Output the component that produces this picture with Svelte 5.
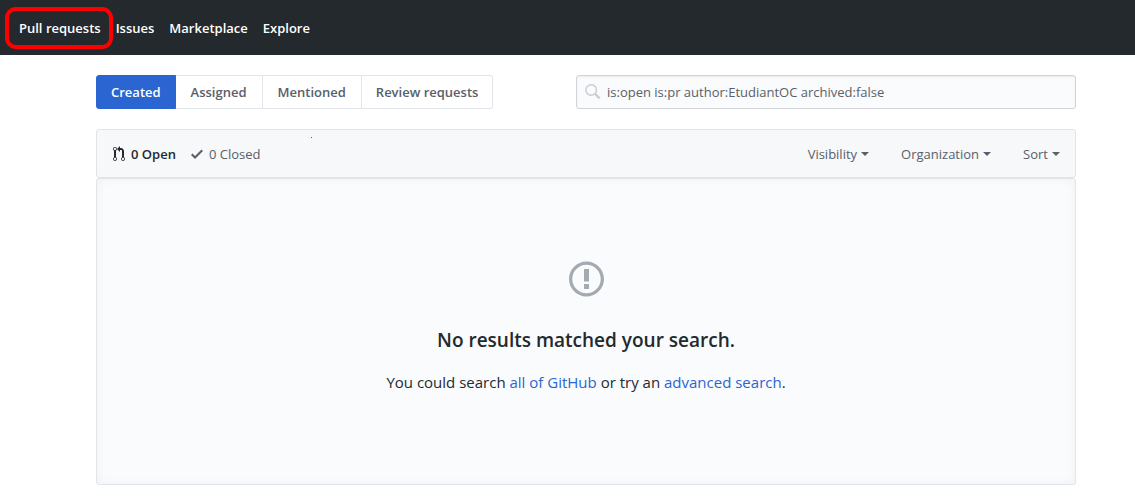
<script>
  const nav = ['Pull requests', 'Issues', 'Marketplace', 'Explore'];
  const tabs = ['Created', 'Assigned', 'Mentioned', 'Review requests'];
  const filters = ['Visibility', 'Organization', 'Sort'];
  let selected = $state('Created');
  let query = $state('is:open is:pr author:EtudiantOC archived:false');
</script>

<header>
  <nav aria-label="Global">
    {#each nav as item, i}
      <a href="#top" class:marked={i === 0}>{item}</a>
    {/each}
  </nav>
</header>

<main>
  <div class="toolbar">
    <div class="tabs">
      {#each tabs as tab}
        <button type="button" class:selected={tab === selected} onclick={() => (selected = tab)}>{tab}</button>
      {/each}
    </div>
    <form role="search" onsubmit={(e) => e.preventDefault()}>
      <svg width="16" height="16" viewBox="0 0 16 16" fill="none" stroke="#c6cbd1" aria-hidden="true">
        <circle cx="6.2" cy="6" r="5.3" stroke-width="1.4" />
        <path d="M10.2 10 14.6 14.4" stroke-width="2.2" />
      </svg>
      <input type="text" aria-label="Search all issues" spellcheck="false" bind:value={query} />
    </form>
  </div>

  <section>
    <div class="box-header">
      <a href="#open" class="state open">
        <svg width="14" height="16" viewBox="-1 0 14 16" fill="currentColor" aria-hidden="true">
          <path d="M11 11.28V5c-.03-.78-.34-1.47-.94-2.06C9.46 2.35 8.78 2.03 8 2H7V0L4 3l3 3V4h1c.27.02.48.11.69.31.21.2.3.42.31.69v6.28A1.993 1.993 0 0 0 10 15a1.993 1.993 0 0 0 1-3.72zm-1 2.92c-.66 0-1.2-.55-1.2-1.2 0-.65.55-1.2 1.2-1.2.65 0 1.2.55 1.2 1.2 0 .65-.55 1.2-1.2 1.2zM4 3c0-1.11-.89-2-2-2a1.993 1.993 0 0 0-1 3.72v6.56A1.993 1.993 0 0 0 2 15a1.993 1.993 0 0 0 1-3.72V4.72c.59-.34 1-.98 1-1.72zm-.8 10c0 .66-.55 1.2-1.2 1.2-.65 0-1.2-.55-1.2-1.2 0-.65.55-1.2 1.2-1.2.65 0 1.2.55 1.2 1.2zM2 4.2C1.34 4.2.8 3.65.8 3c0-.65.55-1.2 1.2-1.2.65 0 1.2.55 1.2 1.2 0 .65-.55 1.2-1.2 1.2z" />
        </svg>
        0 Open
      </a>
      <a href="#closed" class="state">
        <svg width="14" height="16" viewBox="-1 0 14 16" fill="currentColor" aria-hidden="true">
          <path d="M12 5l-8 8-4-4 1.5-1.5L4 10l6.5-6.5L12 5z" />
        </svg>
        0 Closed
      </a>
      <span class="dot"></span>
      <div class="filters">
        {#each filters as filter}
          <button type="button">{filter}<span class="caret"></span></button>
        {/each}
      </div>
    </div>
    <div class="blank">
      <svg width="35" height="40" viewBox="0 0 14 16" fill="#a3aab1" aria-hidden="true">
        <path d="M7 2.3c3.14 0 5.7 2.56 5.7 5.7s-2.56 5.7-5.7 5.7A5.71 5.71 0 0 1 1.3 8c0-3.14 2.56-5.7 5.7-5.7zM7 1C3.14 1 0 4.14 0 8s3.14 7 7 7 7-3.14 7-7-3.14-7-7-7zm1 3H6v5h2V4zm0 6H6v2h2v-2z" />
      </svg>
      <h3>No results matched your search.</h3>
      <p>You could search <a href="#all">all of GitHub</a> or try an <a href="#advanced">advanced search</a>.</p>
    </div>
  </section>
</main>

<style>
  :global(body) {
    background: #fff;
    color: #24292e;
    font: 13px/20px "Open Sans", "Noto Sans", sans-serif;
  }
  a {
    color: inherit;
    text-decoration: none;
  }
  button,
  input {
    font: inherit;
    color: #586069;
    cursor: pointer;
  }
  header {
    background: #24292e;
    color: #fff;
    padding: 18px 19px 17px;
  }
  nav {
    display: flex;
    gap: 15px;
    font-weight: 600;
  }
  nav a {
    position: relative;
  }
  .marked::after {
    content: "";
    position: absolute;
    inset: -11px -12px -11px -14px;
    border: 4px solid #f00;
    border-radius: 11px;
  }
  main {
    padding: 20px 59px 17px 96px;
  }
  .toolbar {
    display: flex;
    justify-content: space-between;
    gap: 20px;
  }
  .tabs {
    display: flex;
  }
  .tabs button {
    background: #fff;
    border: 1px solid #e1e4e8;
    border-left-width: 0;
    padding: 6px 15px;
    font-weight: 600;
    white-space: nowrap;
  }
  .tabs button:first-child {
    border-left-width: 1px;
    padding: 6px 14px;
    border-radius: 3px 0 0 3px;
  }
  .tabs button:last-child {
    padding: 6px 14px;
    border-radius: 0 3px 3px 0;
  }
  .tabs button.selected {
    background: #2a65d2;
    border-color: #2a65d2;
    color: #fff;
  }
  form {
    box-sizing: border-box;
    flex: 0 1 500px;
    display: flex;
    align-items: center;
    gap: 6px;
    padding: 0 8px;
    background: #fafbfc;
    border: 1px solid #d1d5da;
    border-radius: 3px;
    box-shadow: inset 0 1px 2px rgba(27, 31, 35, 0.075);
  }
  input {
    flex: 1;
    min-width: 0;
    border: 0;
    padding: 0;
    background: none;
    outline: 0;
    cursor: text;
  }
  section {
    margin-top: 20px;
  }
  .box-header {
    position: relative;
    display: flex;
    align-items: center;
    gap: 14px;
    padding: 14px 15px 13px;
    background: #f6f8fa;
    border: 1px solid #e1e4e8;
    border-radius: 3px;
    color: #586069;
  }
  .state {
    display: flex;
    align-items: center;
    gap: 5px;
  }
  .open {
    color: #24292e;
    font-weight: 600;
  }
  .dot {
    position: absolute;
    left: 214px;
    top: 7px;
    width: 1px;
    height: 1px;
    background: #e02020;
  }
  .filters {
    display: flex;
    gap: 32px;
    margin-left: auto;
  }
  .filters button {
    display: flex;
    align-items: center;
    gap: 4px;
    border: 0;
    padding: 0;
    background: none;
  }
  .caret {
    border: 4px solid transparent;
    border-top-color: currentColor;
    border-bottom-width: 0;
  }
  .blank {
    display: flex;
    flex-direction: column;
    align-items: center;
    padding: 80px 32px 90px;
    background: #fafbfc;
    border: 1px solid #e1e4e8;
    border-radius: 3px;
    box-shadow: inset 0 0 10px rgba(27, 31, 35, 0.05);
    text-align: center;
  }
  h3 {
    margin: 24px 0 13px;
    font-size: 19px;
    line-height: 34px;
    font-weight: 600;
  }
  p {
    margin: 0;
    font-size: 15px;
    line-height: 24px;
  }
  p a {
    color: #2a65d2;
  }
</style>
